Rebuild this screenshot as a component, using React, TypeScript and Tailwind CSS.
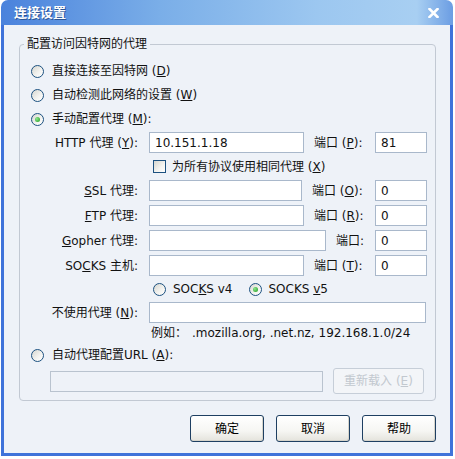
import React from 'react';

const font = "font-['DejaVu_Sans','Noto_Sans_CJK_SC',sans-serif]";

function Radio({ checked }: { checked?: boolean }) {
  return (
    <span className="flex h-[13px] w-[13px] shrink-0 items-center justify-center rounded-full border border-[#1c5180] bg-[linear-gradient(135deg,#d6d6cf_0%,#f4f4f1_60%,#ffffff_100%)]">
      {checked && (
        <span className="h-[5px] w-[5px] rounded-full bg-[radial-gradient(circle_at_35%_35%,#8ee68e,#1c9a1c)]" />
      )}
    </span>
  );
}

function Field({ w, disabled }: { w: string; disabled?: boolean }) {
  return <div className={`${w} h-[21px] shrink-0 border ${disabled ? 'border-[#b9c3cf] bg-[#eef2f8]' : 'border-[#a9b8cb] bg-white'}`} />;
}

function ValueField({ w, value }: { w: string; value: string }) {
  return (
    <div className={`${w} flex h-[21px] shrink-0 items-center border border-[#a9b8cb] bg-white pl-[5px]`}>
      {value}
    </div>
  );
}

function ProxyRow({ label, width, port, value, portValue }: { label: React.ReactNode; width: string; port: React.ReactNode; value?: string; portValue: string }) {
  return (
    <div className="flex h-[21px] items-center">
      <div className="w-[118px] text-right">{label}</div>
      <div className="ml-[11px]">
        {value ? <ValueField w={width} value={value} /> : <Field w={width} />}
      </div>
      <div className="ml-[10px]">{port}</div>
      <div className="ml-auto">
        <ValueField w="w-[52px]" value={portValue} />
      </div>
    </div>
  );
}

function XpButton({ children }: { children: React.ReactNode }) {
  return (
    <button className="flex h-[27px] w-[74px] items-center justify-center rounded-[3px] border border-[#1e3f62] bg-[linear-gradient(180deg,#ffffff_0%,#f6f6f3_60%,#e4e3dc_100%)] text-[12px] text-black shadow-[inset_-1px_-1px_0_#d6d4cb]">
      {children}
    </button>
  );
}

export default function App() {
  return (
    <div className={`h-[459px] w-[455px] overflow-hidden bg-white ${font} text-[12px] leading-[16px] text-[#111]`}>
      <div className="ml-[1px] flex h-[456px] w-[452px] flex-col">
        {/* title bar */}
        <div className="flex h-[25px] shrink-0 items-center justify-between rounded-t-[7px] bg-[linear-gradient(to_right,#4a82dc_0%,#7aaee8_35%,#9cc7f0_70%,#a8cff2_92%,#6b9de3_100%)] pl-[13px] pr-[14px]">
          <span className="text-[13px] font-bold text-white [text-shadow:1px_1px_0_#2c5596]">连接设置</span>
          <svg width="11" height="10" viewBox="0 0 11 10">
            <path d="M1.5 1 L9.5 9 M9.5 1 L1.5 9" stroke="#ffffff" strokeWidth="2.6" strokeLinecap="square" />
          </svg>
        </div>

        {/* body */}
        <div className="flex flex-1 flex-col border-x-[3px] border-b-[3px] border-[#3f73da] bg-[#eef2f8]">
          <fieldset className="ml-[15px] mt-[11px] w-[417px] rounded-[4px] border border-[#c2c9d3] pb-[6px]">
            <legend className="ml-[4px] px-[3px] leading-[16px]">配置访问因特网的代理</legend>

            <div className="pt-[7px]">
              <div className="flex h-[24px] items-center gap-[8px] pl-[11px]">
                <Radio />
                <span>直接连接至因特网 (<u>D</u>)</span>
              </div>
              <div className="flex h-[24px] items-center gap-[8px] pl-[11px]">
                <Radio />
                <span>自动检测此网络的设置 (<u>W</u>)</span>
              </div>
              <div className="flex h-[24px] items-center gap-[8px] pl-[11px]">
                <Radio checked />
                <span>手动配置代理 (<u>M</u>):</span>
              </div>

              <div className="mt-[1px] pr-[8px]">
                <ProxyRow
                  label={<>HTTP 代理 (<u>Y</u>):</>}
                  width="w-[155px]"
                  value="10.151.1.18"
                  port={<>端口 (<u>P</u>):</>}
                  portValue="81"
                />

                <div className="flex h-[27px] items-center gap-[6px] pl-[133px]">
                  <span className="h-[13px] w-[13px] shrink-0 border border-[#1c5180] bg-[linear-gradient(135deg,#d6d6cf_0%,#f4f4f1_60%,#ffffff_100%)]" />
                  <span>为所有协议使用相同代理 (<u>X</u>)</span>
                </div>

                <div className="flex flex-col gap-[4px]">
                  <ProxyRow
                    label={<><u>S</u>SL 代理:</>}
                    width="w-[153px]"
                    port={<>端口 (<u>O</u>):</>}
                    portValue="0"
                  />
                  <ProxyRow
                    label={<><u>F</u>TP 代理:</>}
                    width="w-[155px]"
                    port={<>端口 (<u>R</u>):</>}
                    portValue="0"
                  />
                  <ProxyRow
                    label={<><u>G</u>opher 代理:</>}
                    width="w-[177px]"
                    port={<>端口:</>}
                    portValue="0"
                  />
                  <ProxyRow
                    label={<>SO<u>C</u>KS 主机:</>}
                    width="w-[155px]"
                    port={<>端口 (<u>T</u>):</>}
                    portValue="0"
                  />
                </div>

                <div className="flex h-[26px] items-center pl-[133px]">
                  <Radio />
                  <span className="ml-[7px]">SOC<u>K</u>S v4</span>
                  <span className="ml-[16px]">
                    <Radio checked />
                  </span>
                  <span className="ml-[7px]">SOCKS <u>v</u>5</span>
                </div>

                <div className="flex h-[21px] items-center">
                  <div className="w-[118px] text-right">不使用代理 (<u>N</u>):</div>
                  <div className="ml-[11px]">
                    <Field w="w-[277px]" />
                  </div>
                </div>

                <div className="flex h-[20px] items-center pl-[131px]">
                  <span>例如：</span>
                  <span className="ml-[5px]">.mozilla.org, .net.nz, 192.168.1.0/24</span>
                </div>
              </div>

              <div className="flex h-[24px] items-center gap-[8px] pl-[11px]">
                <Radio />
                <span>自动代理配置URL (<u>A</u>):</span>
              </div>

              <div className="mt-[1px] flex h-[26px] items-center pl-[30px]">
                <Field w="w-[273px]" disabled />
                <button className="ml-[10px] flex h-[26px] w-[91px] items-center justify-center rounded-[3px] border border-[#c6ced8] bg-[#f3f5f8] text-[#c2c8cf]">
                  重新载入 (<u>E</u>)
                </button>
              </div>
            </div>
          </fieldset>

          <div className="mt-[14px] flex justify-end gap-[12px] pr-[14px]">
            <XpButton>确定</XpButton>
            <XpButton>取消</XpButton>
            <XpButton>帮助</XpButton>
          </div>
        </div>
      </div>
    </div>
  );
}
